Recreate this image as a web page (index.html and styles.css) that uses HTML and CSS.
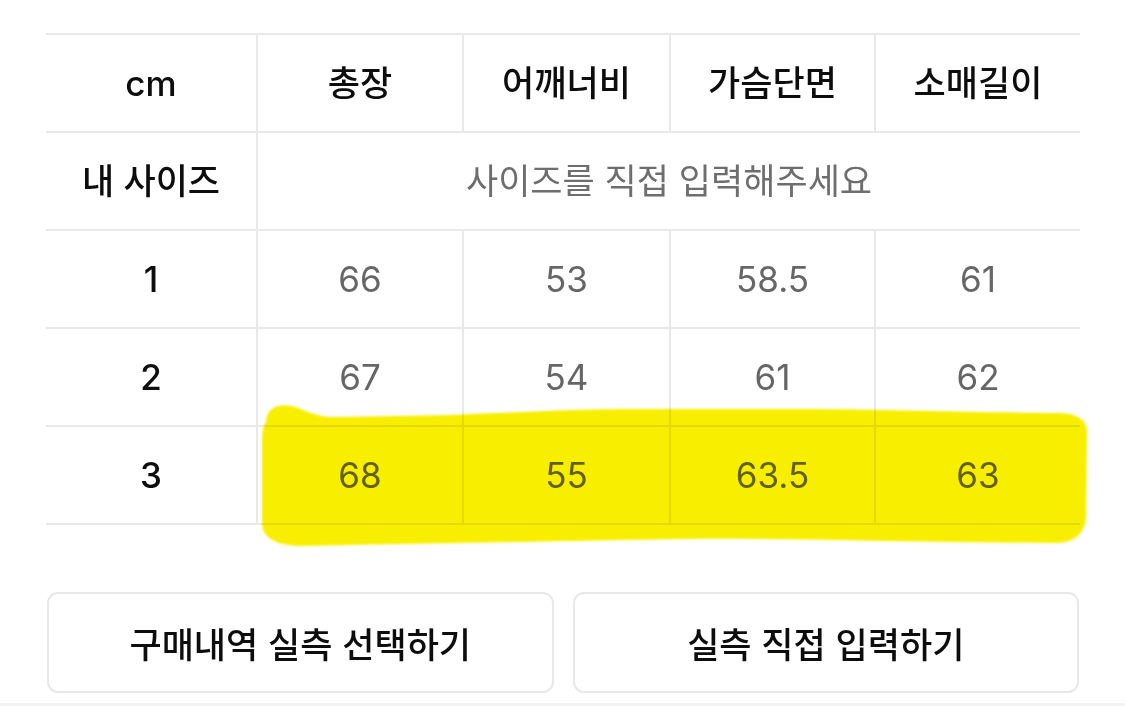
FILE: index.html
```html
<!DOCTYPE html>
<html lang="ko">
<head>
<meta charset="utf-8">
<title>사이즈</title>
<link rel="stylesheet" href="styles.css">
</head>
<body>
<div class="page">
  <div class="sizes">
    <div class="cell head first">cm</div>
    <div class="cell head">총장</div>
    <div class="cell head">어깨너비</div>
    <div class="cell head">가슴단면</div>
    <div class="cell head">소매길이</div>

    <div class="cell head first">내 사이즈</div>
    <div class="cell placeholder">사이즈를 직접 입력해주세요</div>

    <div class="cell head first">1</div>
    <div class="cell val">66</div>
    <div class="cell val">53</div>
    <div class="cell val">58.5</div>
    <div class="cell val">61</div>

    <div class="cell head first">2</div>
    <div class="cell val">67</div>
    <div class="cell val">54</div>
    <div class="cell val">61</div>
    <div class="cell val">62</div>

    <div class="cell head first">3</div>
    <div class="cell val">68</div>
    <div class="cell val">55</div>
    <div class="cell val">63.5</div>
    <div class="cell val">63</div>
  </div>

  <div class="actions">
    <button class="btn">구매내역 실측 선택하기</button>
    <button class="btn">실측 직접 입력하기</button>
  </div>
  <div class="divider"></div>

  <svg class="marker" width="1125" height="706" viewBox="0 0 1125 706" aria-hidden="true">
    <path d="M 266 422 C 266 408, 278 403, 292 406 C 306 410, 315 418, 340 417 L 450 415 C 520 412, 580 409, 640 409 L 820 409 C 900 410, 960 412, 1060 413 Q 1087 414, 1087 432 L 1086 518 Q 1084 541, 1058 543 L 950 542 C 850 540, 750 538, 680 539 C 560 541, 480 543, 400 544 L 300 546 Q 264 545, 262 525 L 262 440 Q 262 427, 266 422 Z" fill="#f8ef00"/>
  </svg>
</div>
</body>
</html>
```
FILE: styles.css
```css
html, body {
  margin: 0;
  padding: 0;
  background: #ffffff;
}

body {
  font-family: "Inter", "Noto Sans CJK KR", sans-serif;
  color: #111111;
}

.page {
  position: relative;
  width: 1125px;
  height: 706px;
  padding-top: 33px;
  box-sizing: border-box;
  overflow: hidden;
}

.sizes {
  margin-left: 46px;
  width: 1034px;
  display: grid;
  grid-template-columns: 210px 206px 207px 205px 206px;
  border-top: 2px solid #e9e9e9;
}

.cell {
  height: 96px;
  border-bottom: 2px solid #e9e9e9;
  border-left: 2px solid #e9e9e9;
  display: flex;
  align-items: center;
  justify-content: center;
  font-size: 35px;
  line-height: 1;
}

.cell.first {
  border-left: none;
}

.head {
  color: #0d0d0d;
  font-weight: 500;
}

.val {
  color: #666666;
  font-size: 35px;
}

.placeholder {
  grid-column: span 4;
  color: #6e6e6e;
  font-size: 35px;
}

.actions {
  margin-left: 47px;
  margin-top: 67px;
  width: 1032px;
  display: grid;
  grid-template-columns: 1fr 1fr;
  gap: 19px;
}

.btn {
  height: 101px;
  border: 2px solid #e8e8e8;
  border-radius: 11px;
  background: #ffffff;
  font-family: "Noto Sans CJK KR", sans-serif;
  font-size: 35px;
  font-weight: 500;
  color: #0d0d0d;
  padding: 0;
}

.divider {
  margin-top: 10px;
  height: 4px;
  background: #f3f3f3;
}

.marker {
  position: absolute;
  left: 0;
  top: 0;
  pointer-events: none;
  mix-blend-mode: multiply;
  filter: blur(1.2px);
}
```
